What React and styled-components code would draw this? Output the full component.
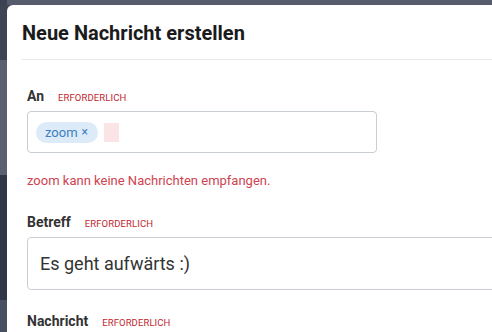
import React from "react";
import styled, { createGlobalStyle } from "styled-components";

const Global = createGlobalStyle`
  html, body { margin: 0; padding: 0; }
  body {
    width: 492px;
    height: 332px;
    overflow: hidden;
    font-family: Roboto, "Noto Sans", "Liberation Sans", sans-serif;
    background:
      linear-gradient(to right, #3c4252 0 7px, #565c6c 7px) top left / 100% 5px no-repeat,
      linear-gradient(to bottom,
        #3e4454 0 60px,
        #5a6070 60px 175px,
        #2f3746 175px 300px,
        #465061 300px 332px);
  }
`;

const Backdrop = styled.div`
  padding: 5px 0 0 7px;
  height: 332px;
  box-sizing: border-box;
  overflow: hidden;
`;

const Modal = styled.div`
  height: 327px;
  background: #ffffff;
  border-radius: 6px 0 0 0;
  display: flex;
  flex-direction: column;
  overflow: hidden;
`;

const Header = styled.div`
  margin: 0 0 0 15px;
  padding: 16px 0 14px 0;
  border-bottom: 1px solid #e8e8e8;
`;

const Title = styled.h1`
  margin: 0;
  font-size: 20px;
  line-height: 24px;
  font-weight: 700;
  color: #1b1b1b;
`;

const Body = styled.div`
  padding: 27px 0 0 20px;
  display: flex;
  flex-direction: column;
`;

const Field = styled.div`
  display: flex;
  flex-direction: column;
  margin-top: ${(p) => p.$top || 0}px;
`;

const LabelRow = styled.div`
  display: flex;
  align-items: baseline;
  gap: 14px;
  height: 18px;
  margin-bottom: 6px;
`;

const Label = styled.span`
  font-size: 14px;
  line-height: 18px;
  font-weight: 700;
  color: #333;
`;

const Required = styled.span`
  font-size: 9.5px;
  line-height: 12px;
  color: #c0262f;
  text-transform: uppercase;
  letter-spacing: 0.1px;
`;

const TagInput = styled.div`
  width: 350px;
  height: 42px;
  box-sizing: border-box;
  border: 1px solid #c9cdd4;
  border-radius: 4px;
  display: flex;
  align-items: center;
  padding: 0 8px;
  gap: 6px;
`;

const Chip = styled.span`
  display: inline-flex;
  align-items: center;
  gap: 4px;
  height: 21px;
  padding: 0 10px 0 9px;
  border-radius: 11px;
  background: #dcebf7;
  color: #3b80c2;
  font-size: 13px;
`;

const ChipX = styled.span`
  font-size: 12px;
`;

const InvalidCaret = styled.span`
  width: 15px;
  height: 19px;
  background: #fbe4e6;
  margin-top: 1px;
`;

const ErrorText = styled.div`
  margin-top: 20px;
  font-size: 13px;
  line-height: 16px;
  color: #cf4350;
`;

const TextInput = styled.div`
  width: 520px;
  flex-shrink: 0;
  height: 53px;
  box-sizing: border-box;
  border: 1px solid #c9cdd4;
  border-radius: 4px;
  display: flex;
  align-items: center;
  padding: 0 12px;
  font-size: 18px;
  color: #333;
`;

export default function App() {
  return (
    <>
      <Global />
      <Backdrop>
        <Modal>
          <Header>
            <Title>Neue Nachricht erstellen</Title>
          </Header>
          <Body>
            <Field>
              <LabelRow>
                <Label>An</Label>
                <Required>Erforderlich</Required>
              </LabelRow>
              <TagInput>
                <Chip>
                  zoom <ChipX>×</ChipX>
                </Chip>
                <InvalidCaret />
              </TagInput>
              <ErrorText>zoom kann keine Nachrichten empfangen.</ErrorText>
            </Field>
            <Field $top={24}>
              <LabelRow>
                <Label>Betreff</Label>
                <Required>Erforderlich</Required>
              </LabelRow>
              <TextInput>Es geht aufwärts :)</TextInput>
            </Field>
            <Field $top={22}>
              <LabelRow>
                <Label>Nachricht</Label>
                <Required>Erforderlich</Required>
              </LabelRow>
            </Field>
          </Body>
        </Modal>
      </Backdrop>
    </>
  );
}
